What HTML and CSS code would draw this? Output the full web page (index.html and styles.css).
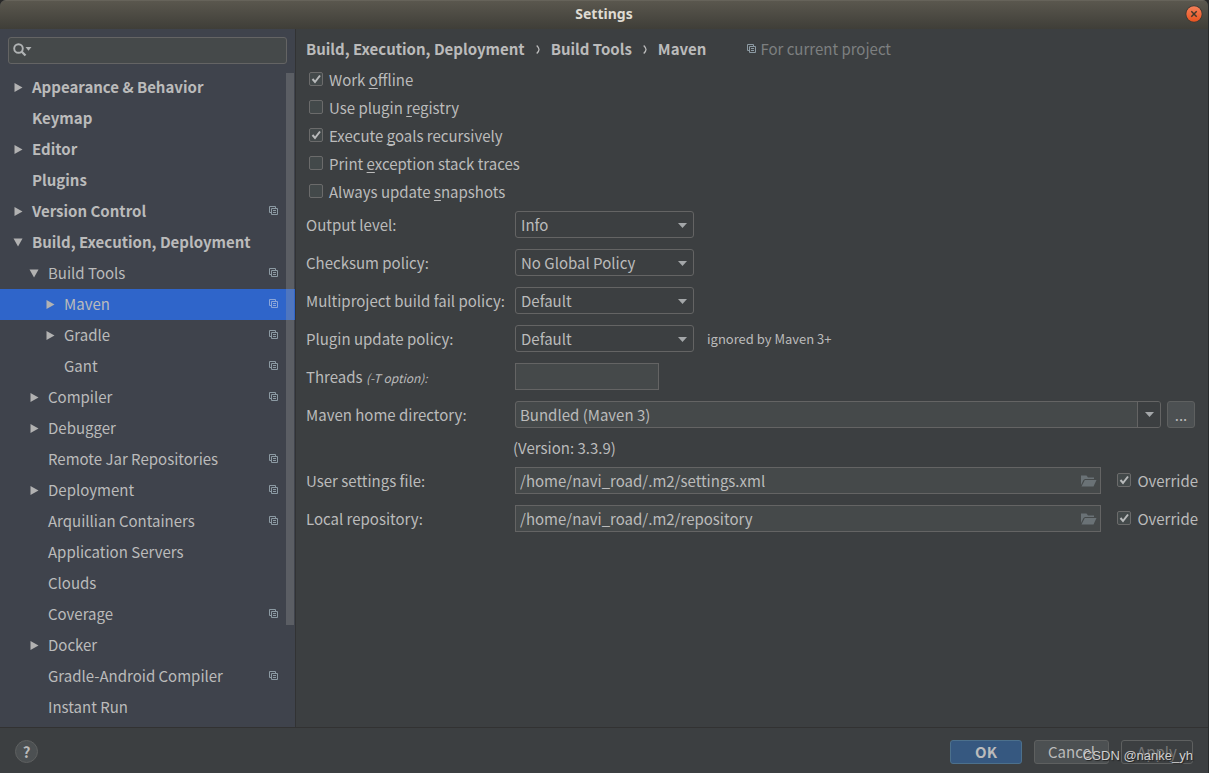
FILE: index.html
```
<!DOCTYPE html>
<html lang="en">
<head>
<meta charset="utf-8">
<title>Settings</title>
<link rel="stylesheet" href="styles.css">
</head>
<body>
<svg class="defs" aria-hidden="true">
  <symbol id="right" viewBox="0 0 10 10"><path d="M1.500 0V9L9.500 4.500z" fill="#b2b2b2"/></symbol>
  <symbol id="down" viewBox="0 0 10 10"><path d="M0.500 .5H9.500L5 8.500z" fill="#b2b2b2"/></symbol>
  <symbol id="copy" viewBox="0 0 9 9"><path d="M2 6.5H.5V.5H6.500V2M2.500 2.500H8.500V8.500H2.500zM4 4.500H7M4 6.500H7" fill="none" stroke="currentColor"/></symbol>
  <symbol id="caret" viewBox="0 0 9 5"><path d="M0 0H9L4.500 5z" fill="#a4a7a9"/></symbol>
  <symbol id="folder" viewBox="0 0 16 12"><path d="M0 10V.5H5.500L7 2.500H13V4H4L2.500 5z" fill="#6a7276"/><path d="M3.800 5H15.500L12.500 11.500H.5z" fill="#6a7276"/></symbol>
</svg>
<div class="window">
  <header class="titlebar">
    <h1>Settings</h1>
    <button class="close" aria-label="Close"><svg viewBox="0 0 18 18" width="18" height="18"><circle cx="9" cy="9" r="8.500" fill="#3a3631"/><circle cx="9" cy="9" r="7.700" fill="url(#g)"/><defs><linearGradient id="g" x2="0" y2="1"><stop stop-color="#f58059"/><stop offset="1" stop-color="#e95420"/></linearGradient></defs><path d="M6.300 6.300l5.400 5.400M11.700 6.300l-5.400 5.400" stroke="#42382b" stroke-width="1.500"/></svg></button>
  </header>
  <div class="body">
    <nav class="sidebar" aria-label="Settings categories">
      <label class="search">
        <svg viewBox="0 0 20 14" width="20" height="14" aria-hidden="true"><circle cx="5.500" cy="5.500" r="4.300" fill="none" stroke="#b0b3b4" stroke-width="1.900"/><path d="M8.500 8.500L12.500 12.500" stroke="#b0b3b4" stroke-width="2.300"/><path d="M12.500 4H18.500L15.500 7.700z" fill="#b0b3b4"/></svg>
        <input type="search" aria-label="Search settings">
      </label>
      <div class="tree-area">
        <ul class="tree">
          <li><button class="row top"><svg class="arrow"><use href="#right"/></svg><span>Appearance &amp; Behavior</span></button></li>
          <li><button class="row top"><i class="arrow"></i><span>Keymap</span></button></li>
          <li><button class="row top"><svg class="arrow"><use href="#right"/></svg><span>Editor</span></button></li>
          <li><button class="row top"><i class="arrow"></i><span>Plugins</span></button></li>
          <li><button class="row top"><svg class="arrow"><use href="#right"/></svg><span>Version Control</span><svg class="copy"><use href="#copy"/></svg></button></li>
          <li><button class="row top"><svg class="arrow"><use href="#down"/></svg><span>Build, Execution, Deployment</span></button></li>
          <li><button class="row"><svg class="arrow"><use href="#down"/></svg><span>Build Tools</span><svg class="copy"><use href="#copy"/></svg></button></li>
          <li><button class="row deep selected"><svg class="arrow"><use href="#right"/></svg><span>Maven</span><svg class="copy"><use href="#copy"/></svg></button></li>
          <li><button class="row deep"><svg class="arrow"><use href="#right"/></svg><span>Gradle</span><svg class="copy"><use href="#copy"/></svg></button></li>
          <li><button class="row deep"><i class="arrow"></i><span>Gant</span><svg class="copy"><use href="#copy"/></svg></button></li>
          <li><button class="row"><svg class="arrow"><use href="#right"/></svg><span>Compiler</span><svg class="copy"><use href="#copy"/></svg></button></li>
          <li><button class="row"><svg class="arrow"><use href="#right"/></svg><span>Debugger</span></button></li>
          <li><button class="row"><i class="arrow"></i><span>Remote Jar Repositories</span><svg class="copy"><use href="#copy"/></svg></button></li>
          <li><button class="row"><svg class="arrow"><use href="#right"/></svg><span>Deployment</span><svg class="copy"><use href="#copy"/></svg></button></li>
          <li><button class="row"><i class="arrow"></i><span>Arquillian Containers</span><svg class="copy"><use href="#copy"/></svg></button></li>
          <li><button class="row"><i class="arrow"></i><span>Application Servers</span></button></li>
          <li><button class="row"><i class="arrow"></i><span>Clouds</span></button></li>
          <li><button class="row"><i class="arrow"></i><span>Coverage</span><svg class="copy"><use href="#copy"/></svg></button></li>
          <li><button class="row"><svg class="arrow"><use href="#right"/></svg><span>Docker</span></button></li>
          <li><button class="row"><i class="arrow"></i><span>Gradle-Android Compiler</span><svg class="copy"><use href="#copy"/></svg></button></li>
          <li><button class="row"><i class="arrow"></i><span>Instant Run</span></button></li>
        </ul>
        <div class="scroll-thumb"></div>
      </div>
    </nav>
    <main class="content">
      <div class="crumbs">
        <b>Build, Execution, Deployment</b>
        <svg class="chevron" viewBox="0 0 4 9"><path d="M.7 .5C3.800 3.500 3.800 5.500 .7 8.500" fill="none" stroke="#bbb" stroke-width="1.300"/></svg>
        <b>Build Tools</b>
        <svg class="chevron" viewBox="0 0 4 9"><path d="M.7 .5C3.800 3.500 3.800 5.500 .7 8.500" fill="none" stroke="#bbb" stroke-width="1.300"/></svg>
        <b>Maven</b>
        <span class="scope"><svg class="copy"><use href="#copy"/></svg>For current project</span>
      </div>
      <div class="checks">
        <label class="check"><input type="checkbox" checked><span>Work <u>o</u>ffline</span></label>
        <label class="check"><input type="checkbox"><span>Use plugin <u>r</u>egistry</span></label>
        <label class="check"><input type="checkbox" checked><span>Execute <u>g</u>oals recursively</span></label>
        <label class="check"><input type="checkbox"><span>Print <u>e</u>xception stack traces</span></label>
        <label class="check"><input type="checkbox"><span>Always update <u>s</u>napshots</span></label>
      </div>
      <div class="form">
        <label for="output">Output level:</label>
        <div class="field"><div class="combo"><select id="output"><option>Info</option></select><svg class="caret"><use href="#caret"/></svg></div></div>
        <label for="checksum">Checksum policy:</label>
        <div class="field"><div class="combo"><select id="checksum"><option>No Global Policy</option></select><svg class="caret"><use href="#caret"/></svg></div></div>
        <label for="fail">Multiproject build fail policy:</label>
        <div class="field"><div class="combo"><select id="fail"><option>Default</option></select><svg class="caret"><use href="#caret"/></svg></div></div>
        <label for="update">Plugin update policy:</label>
        <div class="field"><div class="combo"><select id="update"><option>Default</option></select><svg class="caret"><use href="#caret"/></svg></div><span class="note">ignored by Maven 3+</span></div>
        <label for="threads">Threads <em>(-T option):</em></label>
        <div class="field"><input id="threads" class="text threads" type="text"></div>
        <label for="home">Maven home directory:</label>
        <div class="field home"><div class="editable"><input id="home" type="text" value="Bundled (Maven 3)"><button aria-label="Show choices"><svg class="caret-inline"><use href="#caret"/></svg></button></div><button class="more" aria-label="Browse">...</button></div>
        <p class="version">(Version: 3.3.9)</p>
        <label for="user">User settings file:</label>
        <div class="field"><div class="file"><input id="user" class="text" type="text" value="/home/navi_road/.m2/settings.xml"><svg class="folder"><use href="#folder"/></svg></div><label class="check override"><input type="checkbox" checked><span>Override</span></label></div>
        <label for="repo">Local repository:</label>
        <div class="field"><div class="file"><input id="repo" class="text" type="text" value="/home/navi_road/.m2/repository"><svg class="folder"><use href="#folder"/></svg></div><label class="check override"><input type="checkbox" checked><span>Override</span></label></div>
      </div>
    </main>
  </div>
  <footer class="footer">
    <button class="help" aria-label="Help">?</button>
    <div class="actions">
      <button class="btn primary">OK</button>
      <button class="btn cancel">Cancel</button>
      <button class="btn apply" disabled>Apply</button>
    </div>
    <span class="watermark">CSDN @nanke_yh</span>
  </footer>
</div>
</body>
</html>
```
FILE: styles.css
```
* { box-sizing: border-box; }
body {
  margin: 0;
  background: #282828;
  color: #bbb;
  font: 15px/24px "Noto Sans CJK SC", "Noto Sans", sans-serif;
}
button, input, select { font: inherit; color: inherit; margin: 0; }
button { padding: 0; border: 0; background: none; }
.defs { display: none; }
svg { display: block; flex: none; }
.window {
  display: flex;
  flex-direction: column;
  height: 100vh;
  border-right: 1px solid #282b2c;
  background: #3c3f41;
  overflow: hidden;
  border-radius: 6px 6px 0 0;
}
.titlebar {
  display: grid;
  grid-template-columns: 58px 1fr 58px;
  align-items: center;
  flex: none;
  height: 29px;
  padding-bottom: 2px;
  border-top: 1px solid #66635a;
  background: linear-gradient(#5a574e, #3f3e38);
}
.titlebar h1 {
  grid-column: 2;
  margin: 0;
  text-align: center;
  color: #dfdbd2;
  font: bold 14px/20px "Noto Sans", sans-serif;
}
.close { justify-self: end; margin-right: 5px; }
.body { display: flex; flex: 1; min-height: 0; }
.sidebar {
  display: flex;
  flex-direction: column;
  flex: none;
  width: 296px;
  border-right: 1px solid #323334;
  background: #3f434c;
}
.search {
  display: flex;
  align-items: center;
  flex: none;
  height: 27px;
  margin: 8px;
  padding: 0 4px 2px;
  border: 1px solid #646464;
  border-radius: 3px;
  background: #45494a;
}
.search input { flex: 1; min-width: 0; border: 0; outline: 0; background: none; }
.tree-area { position: relative; flex: 1; min-height: 0; overflow: hidden; }
.tree { margin: 0; padding: 0; list-style: none; }
.row {
  display: flex;
  align-items: center;
  gap: 9px;
  width: 100%;
  height: 31px;
  padding: 0 17px 0 29px;
  text-align: left;
}
.row span { flex: 1; padding-bottom: 2px; white-space: nowrap; }
.row.top { padding-left: 13px; font-weight: bold; }
.row.deep { padding-left: 45px; }
.row.selected { background: #2f65ca; }
.arrow { width: 10px; height: 10px; flex: none; }
.copy { width: 9px; height: 9px; color: #8c9aa3; }
.row .copy { margin-bottom: 2px; }
.selected .copy { color: #8ba6d8; }
.scroll-thumb {
  position: absolute;
  top: 1px;
  right: 1px;
  width: 8px;
  height: 84.3%;
  background: rgba(166, 166, 166, .28);
}
.content { flex: 1; min-width: 0; padding: 8px 10px; }
.crumbs { display: flex; align-items: center; height: 24px; gap: 11px; }
.chevron { width: 4px; height: 9px; }
.scope { display: flex; align-items: center; gap: 4px; margin-left: 30px; color: #7d7f80; }
.scope .copy { margin-bottom: 1px; }
.checks { display: grid; margin: 5px 0 5px 3px; }
.check { display: flex; align-items: center; gap: 6px; height: 28px; }
.check input {
  appearance: none;
  width: 14px;
  height: 14px;
  margin-bottom: 2px;
  border: 1px solid #6b6b6b;
  border-radius: 2px;
  background: #43494a;
}
.check input:checked {
  background: #43494a url("data:image/svg+xml,%3Csvg xmlns='http://www.w3.org/2000/svg' viewBox='0 0 12 12'%3E%3Cpath d='M2.500 6L5 9L10 2.500' fill='none' stroke='%23b8babb' stroke-width='2'/%3E%3C/svg%3E") center / 12px 12px no-repeat;
}
u { text-underline-offset: 2px; text-decoration-thickness: 1px; text-decoration-skip-ink: none; }
.form {
  display: grid;
  grid-template-columns: 209px 1fr;
  row-gap: 11px;
  align-items: center;
}
.form > label { white-space: nowrap; }
.form em { font: italic 12px/20px "Noto Sans CJK SC", "Noto Sans", sans-serif; }
.field { display: flex; align-items: center; height: 27px; }
.combo { position: relative; width: 179px; }
.combo select {
  appearance: none;
  display: block;
  width: 100%;
  height: 27px;
  padding: 0 5px;
  border: 1px solid #646464;
  border-radius: 3px;
  background: #3c3f41;
}
.caret { position: absolute; right: 7px; top: 12px; width: 9px; height: 5px; pointer-events: none; }
.caret-inline { width: 9px; height: 5px; margin: auto; }
.note { margin-left: 13px; font-size: 13px; }
.text {
  height: 27px;
  padding: 0 4px;
  border: 1px solid #646464;
  background: #45494a;
}
.threads { width: 144px; }
.home { gap: 6px; padding-right: 3px; }
.editable {
  display: flex;
  flex: 1;
  height: 27px;
  border: 1px solid #646464;
  border-radius: 3px;
  background: #45494a;
  overflow: hidden;
}
.editable input { flex: 1; min-width: 0; padding: 0 4px; border: 0; background: none; }
.editable button { width: 23px; border-left: 1px solid #646464; background: #3c3f41; }
.more, .btn {
  height: 27px;
  border: 1px solid #5e6060;
  border-radius: 3px;
  background: #4c5052;
}
.more { width: 28px; }
.version { grid-column: 2; margin: -3px 0 -4px -2px; }
.file { position: relative; flex: 1; }
.file .text { display: block; width: 100%; padding-right: 24px; }
.folder { position: absolute; right: 4px; top: 8px; width: 16px; height: 12px; }
.override { margin-left: 16px; }
.footer {
  position: relative;
  display: flex;
  align-items: center;
  justify-content: space-between;
  flex: none;
  height: 46px;
  padding: 2px 15px 0;
  border-top: 1px solid #323232;
}
.help {
  width: 23px;
  height: 23px;
  border: 1px solid #5e6060;
  border-radius: 50%;
  background: #4c5052;
  font-weight: bold;
  line-height: 20px;
}
.actions { display: flex; gap: 12px; }
.btn { width: 72px; height: 24px; line-height: 22px; }
.primary { border-color: #4c708c; background: #365880; font-weight: bold; }
.cancel { width: 75px; }
.apply { background: none; color: #777; }
.watermark {
  position: absolute;
  right: 15px;
  bottom: 7px;
  color: #d0d0d0;
  font: 13px/20px "Liberation Sans", Arial, sans-serif;
  text-shadow: 1px 1px 1px #222;
}
```
